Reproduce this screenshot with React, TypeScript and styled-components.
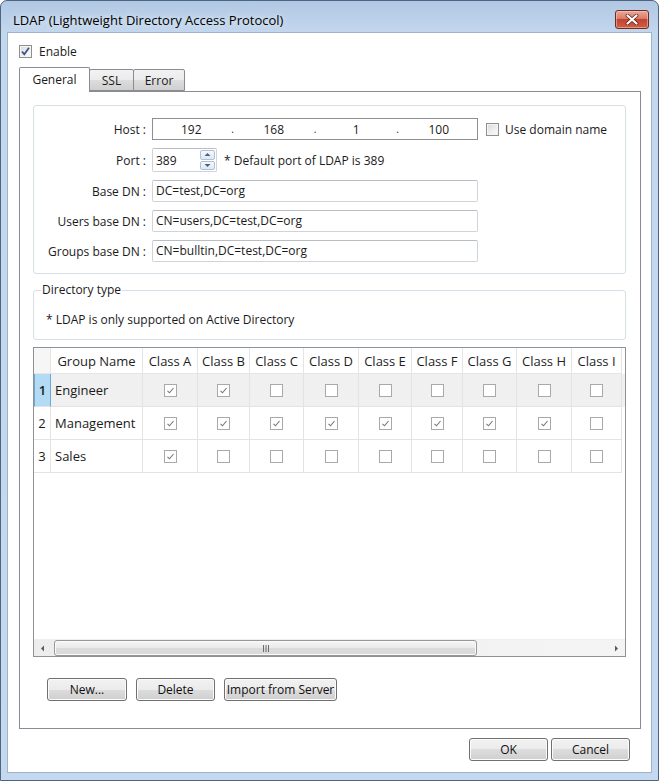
import styled, { createGlobalStyle } from 'styled-components'

const GlobalStyle = createGlobalStyle`
  html, body { margin: 0; padding: 0; background: #fff; }
  body {
    font-family: 'Open Sans', 'Noto Sans', sans-serif;
    font-size: 12px;
    color: #1a1a1a;
  }
  * { box-sizing: border-box; }
`

const Window = styled.div`
  width: 659px;
  height: 781px;
  border: 1px solid #4f647e;
  border-radius: 7px 7px 0 0;
  background: linear-gradient(#b1c8e4 0, #c3d7ed 32px, #c4d9ef 100%);
  display: flex;
  flex-direction: column;
`

const TitleBar = styled.div`
  height: 31px;
  padding: 6px 9px 0 12px;
  display: flex;
  align-items: center;
  justify-content: space-between;
`

const Title = styled.div`
  font-size: 13px;
  color: #000;
  text-shadow: 0 0 6px rgba(255, 255, 255, 0.9);
`

const CloseButton = styled.div`
  width: 34px;
  height: 19px;
  margin-top: -1px;
  border: 1px solid #6e2b22;
  border-radius: 3px;
  background: linear-gradient(#e9a99b 0, #d97a66 45%, #c2442f 50%, #cf5f45 100%);
  box-shadow: inset 0 0 0 1px rgba(255, 210, 200, 0.5);
  display: flex;
  align-items: center;
  justify-content: center;
`

const Client = styled.div`
  flex: 1;
  margin: 0 6px 7px;
  border: 1px solid #9fb4cc;
  background: #fff;
  padding: 12px 10px 10px 11px;
  display: flex;
  flex-direction: column;
`

const CheckRow = styled.label`
  display: flex;
  align-items: center;
  gap: 7px;
  height: 13px;
  line-height: 13px;
`

const Box = styled.span<{ $light?: boolean }>`
  width: 13px;
  height: 13px;
  flex: none;
  border: 1px solid ${(p) => (p.$light ? '#a9a9a9' : '#8e8f8f')};
  background: ${(p) =>
    p.$light ? '#fff' : 'linear-gradient(135deg, #d9d9d9 0, #f0f0f0 60%, #fbfbfb 100%)'};
  box-shadow: ${(p) => (p.$light ? 'none' : 'inset 0 0 0 1px #f4f4f4')};
  display: flex;
  align-items: center;
  justify-content: center;
`

const TabStrip = styled.div`
  margin-top: 9px;
  height: 24px;
  display: flex;
  align-items: flex-end;
`

const Tab = styled.div<{ $active?: boolean; $w: number }>`
  width: ${(p) => p.$w}px;
  height: ${(p) => (p.$active ? 25 : 22)}px;
  margin-bottom: ${(p) => (p.$active ? -1 : 0)}px;
  margin-left: ${(p) => (p.$active ? 0 : -1)}px;
  position: relative;
  z-index: ${(p) => (p.$active ? 2 : 1)};
  border: 1px solid #898c95;
  border-bottom: ${(p) => (p.$active ? 'none' : '1px solid #898c95')};
  border-radius: 2px 2px 0 0;
  background: ${(p) =>
    p.$active ? '#fff' : 'linear-gradient(#f2f2f2 0, #ebebeb 50%, #dddddd 50%, #cfcfcf 100%)'};
  display: flex;
  align-items: center;
  justify-content: center;
  padding-bottom: ${(p) => (p.$active ? 2 : 0)}px;
  &:first-child { margin-left: 0; }
`

const Panel = styled.div`
  border: 1px solid #898c95;
  background: #fff;
  padding: 13px 14px 27px 13px;
  display: flex;
  flex-direction: column;
`

const GroupBox = styled.div`
  border: 1px solid #d5dfe5;
  border-radius: 3px;
  padding: 12px 0 11px 0;
`

const FormGrid = styled.div`
  display: grid;
  grid-template-columns: 112px auto;
  column-gap: 6px;
  row-gap: 8px;
  align-items: center;
`

const Label = styled.div`
  text-align: right;
  white-space: nowrap;
`

const FieldLine = styled.div`
  display: flex;
  align-items: center;
`

const TextBox = styled.div`
  width: 326px;
  height: 22px;
  border: 1px solid #cfd4da;
  border-top-color: #b9bec5;
  border-radius: 2px;
  padding-left: 3px;
  line-height: 20px;
  white-space: nowrap;
`

const IpBox = styled.div`
  width: 326px;
  height: 22px;
  border: 1px solid #8d8f91;
  display: flex;
  align-items: center;
`

const IpPart = styled.span`
  flex: 1;
  text-align: center;
`

const IpDot = styled.span`
  width: 6px;
  text-align: center;
  font-size: 10px;
`

const SideCheck = styled(CheckRow)`
  margin-left: 8px;
  gap: 6px;
`

const Spinner = styled.div`
  width: 65px;
  height: 24px;
  border: 1px solid #cfd4da;
  border-top-color: #b9bec5;
  border-radius: 2px;
  display: flex;
  align-items: center;
  justify-content: space-between;
  padding: 1px 1px 1px 3px;
`

const SpinButtons = styled.div`
  width: 15px;
  height: 20px;
  display: flex;
  flex-direction: column;
  gap: 1px;
`

const SpinButton = styled.div`
  flex: 1;
  border: 1px solid #b3c0d1;
  border-radius: 2px;
  background: linear-gradient(#f4f8fd, #dde8f5);
  display: flex;
  align-items: center;
  justify-content: center;
`

const Note = styled.span`
  margin-left: 7px;
`

const FieldSet = styled.fieldset`
  margin: 8px 0 0 0;
  border: 1px solid #d5dfe5;
  border-radius: 3px;
  padding: 0 12px 11px 12px;
  min-width: 0;
`

const Legend = styled.legend`
  margin-left: -5px;
  padding: 0 1px;
  line-height: 16px;
`

const FieldText = styled.div`
  margin-top: 14px;
  line-height: 16px;
`

const Table = styled.div`
  margin-top: 7px;
  height: 310px;
  border: 1px solid #8e9296;
  display: flex;
  flex-direction: column;
`

const GridRow = styled.div<{ $h: number; $sel?: boolean }>`
  display: grid;
  grid-template-columns: 17px 92px 55px 52px 54px 55px 53px 51px 54px 55px 50px;
  height: ${(p) => p.$h}px;
  background: ${(p) => (p.$sel ? '#f0f0f0' : '#fff')};
  font-size: 13px;
`

const HeadCell = styled.div<{ $corner?: boolean }>`
  border-right: 1px solid #e5e5e5;
  border-bottom: 1px solid #e5e5e5;
  background: ${(p) => (p.$corner ? '#f6f6f6' : '#fff')};
  display: flex;
  align-items: center;
  justify-content: center;
  white-space: nowrap;
  overflow: hidden;
  color: #1e1e1e;
`

const Cell = styled.div<{ $left?: boolean }>`
  border-right: 1px solid #e3e3e3;
  border-bottom: 1px solid #e3e3e3;
  display: flex;
  align-items: center;
  justify-content: ${(p) => (p.$left ? 'flex-start' : 'center')};
  padding-left: ${(p) => (p.$left ? 4 : 0)}px;
  white-space: nowrap;
`

const RowHead = styled.div<{ $sel?: boolean }>`
  border-right: 1px solid ${(p) => (p.$sel ? '#6ea8d6' : '#e3e3e3')};
  border-left: ${(p) => (p.$sel ? '1px solid #6ea8d6' : 'none')};
  border-bottom: 1px solid #e3e3e3;
  background: ${(p) => (p.$sel ? '#b4dbf4' : '#fff')};
  display: flex;
  align-items: center;
  justify-content: center;
  font-weight: ${(p) => (p.$sel ? 600 : 400)};
`

const TableBlank = styled.div`
  flex: 1;
`

const HScroll = styled.div`
  height: 17px;
  display: flex;
  align-items: stretch;
  background: linear-gradient(90deg, #ededed, #f4f4f4);
  border-top: 1px solid #f0f0f0;
`

const ScrollArrow = styled.div`
  width: 17px;
  display: flex;
  align-items: center;
  justify-content: center;
`

const ScrollTrack = styled.div`
  flex: 1;
  padding: 0 2px;
  display: flex;
  align-items: stretch;
`

const Thumb = styled.div`
  width: 423px;
  margin: 0 0 0 1px;
  border: 1px solid #979797;
  border-radius: 3px;
  background: linear-gradient(#f6f6f6 0, #e9e9e9 50%, #dcdcdc 50%, #d9d9d9 100%);
  box-shadow: inset 0 0 0 1px #fbfbfb;
  display: flex;
  align-items: center;
  justify-content: center;
`

const ButtonRow = styled.div<{ $end?: boolean }>`
  display: flex;
  gap: ${(p) => (p.$end ? 3 : 9)}px;
  justify-content: ${(p) => (p.$end ? 'flex-end' : 'flex-start')};
  margin-top: ${(p) => (p.$end ? 9 : 21)}px;
  padding: ${(p) => (p.$end ? '0 11px 0 0' : '0 0 0 14px')};
`

const Button = styled.div<{ $w: number }>`
  width: ${(p) => p.$w}px;
  height: 23px;
  border: 1px solid #707070;
  border-radius: 3px;
  background: linear-gradient(#f2f2f2 0, #ebebeb 50%, #dddddd 50%, #cfcfcf 100%);
  box-shadow: inset 0 0 0 1px #fcfcfc;
  display: flex;
  align-items: center;
  justify-content: center;
  white-space: nowrap;
  color: #111;
`

const columns = [
  { name: 'Class A' },
  { name: 'Class B' },
  { name: 'Class C' },
  { name: 'Class D' },
  { name: 'Class E' },
  { name: 'Class F' },
  { name: 'Class G' },
  { name: 'Class H' },
  { name: 'Class I' },
]

const groups = [
  { name: 'Engineer', checks: [1, 1, 0, 0, 0, 0, 0, 0, 0] },
  { name: 'Management', checks: [1, 1, 1, 1, 1, 1, 1, 1, 0] },
  { name: 'Sales', checks: [1, 0, 0, 0, 0, 0, 0, 0, 0] },
]

function Check({ checked, light }: { checked?: boolean; light?: boolean }) {
  return (
    <Box $light={light}>
      {checked &&
        (light ? (
          <svg width="11" height="11" viewBox="0 0 11 11">
            <path d="M2.5 5.8 L4.5 7.8 L8.5 3" fill="none" stroke="#767676" strokeWidth="1.1" />
          </svg>
        ) : (
          <svg width="11" height="11" viewBox="0 0 11 11">
            <path d="M2 5.5 L4.3 8.3 L9 1.8" fill="none" stroke="#3b4f8c" strokeWidth="1.7" />
          </svg>
        ))}
    </Box>
  )
}

function Arrow({ dir }: { dir: 'up' | 'down' | 'left' | 'right' }) {
  const d = {
    up: 'M0.5 4 L3.5 1 L6.5 4 Z',
    down: 'M0.5 1 L3.5 4 L6.5 1 Z',
    left: 'M4 0.5 L1 3.5 L4 6.5 Z',
    right: 'M1 0.5 L4 3.5 L1 6.5 Z',
  }[dir]
  const vertical = dir === 'up' || dir === 'down'
  return (
    <svg width={vertical ? 7 : 5} height={vertical ? 5 : 7} viewBox={vertical ? '0 0 7 5' : '0 0 5 7'}>
      <path d={d} fill={vertical ? '#4b5f82' : '#5a5a5a'} />
    </svg>
  )
}

export default function App() {
  return (
    <>
      <GlobalStyle />
      <Window>
        <TitleBar>
          <Title>LDAP (Lightweight Directory Access Protocol)</Title>
          <CloseButton>
            <svg width="14" height="11" viewBox="0 0 14 11">
              <path d="M2.5 1.5 L11.5 9.5 M11.5 1.5 L2.5 9.5" stroke="#5a1d16" strokeWidth="3.6" strokeLinecap="round" />
              <path d="M2.5 1.5 L11.5 9.5 M11.5 1.5 L2.5 9.5" stroke="#fff" strokeWidth="2.2" strokeLinecap="round" />
            </svg>
          </CloseButton>
        </TitleBar>

        <Client>
          <CheckRow>
            <Check checked />
            Enable
          </CheckRow>

          <TabStrip>
            <Tab $active $w={71}>General</Tab>
            <Tab $w={45}>SSL</Tab>
            <Tab $w={52}>Error</Tab>
          </TabStrip>

          <Panel>
            <GroupBox>
              <FormGrid>
                <Label>Host :</Label>
                <FieldLine>
                  <IpBox>
                    <IpPart>192</IpPart>
                    <IpDot>.</IpDot>
                    <IpPart>168</IpPart>
                    <IpDot>.</IpDot>
                    <IpPart>1</IpPart>
                    <IpDot>.</IpDot>
                    <IpPart>100</IpPart>
                  </IpBox>
                  <SideCheck>
                    <Check />
                    Use domain name
                  </SideCheck>
                </FieldLine>

                <Label>Port :</Label>
                <FieldLine>
                  <Spinner>
                    <span>389</span>
                    <SpinButtons>
                      <SpinButton><Arrow dir="up" /></SpinButton>
                      <SpinButton><Arrow dir="down" /></SpinButton>
                    </SpinButtons>
                  </Spinner>
                  <Note>* Default port of LDAP is 389</Note>
                </FieldLine>

                <Label>Base DN :</Label>
                <TextBox>DC=test,DC=org</TextBox>

                <Label>Users base DN :</Label>
                <TextBox>CN=users,DC=test,DC=org</TextBox>

                <Label>Groups base DN :</Label>
                <TextBox>CN=bulltin,DC=test,DC=org</TextBox>
              </FormGrid>
            </GroupBox>

            <FieldSet>
              <Legend>Directory type</Legend>
              <FieldText>* LDAP is only supported on Active Directory</FieldText>
            </FieldSet>

            <Table>
              <GridRow $h={26}>
                <HeadCell $corner />
                <HeadCell>Group Name</HeadCell>
                {columns.map((c) => (
                  <HeadCell key={c.name}>{c.name}</HeadCell>
                ))}
              </GridRow>
              {groups.map((g, i) => (
                <GridRow key={g.name} $h={33} $sel={i === 0}>
                  <RowHead $sel={i === 0}>{i + 1}</RowHead>
                  <Cell $left>{g.name}</Cell>
                  {g.checks.map((v, j) => (
                    <Cell key={j}>
                      <Check light checked={!!v} />
                    </Cell>
                  ))}
                </GridRow>
              ))}
              <TableBlank />
              <HScroll>
                <ScrollArrow><Arrow dir="left" /></ScrollArrow>
                <ScrollTrack>
                  <Thumb>
                    <svg width="8" height="7" viewBox="0 0 8 7">
                      <path d="M1.5 0 V7 M4 0 V7 M6.5 0 V7" stroke="#6b6b6b" strokeWidth="1" />
                    </svg>
                  </Thumb>
                </ScrollTrack>
                <ScrollArrow><Arrow dir="right" /></ScrollArrow>
              </HScroll>
            </Table>

            <ButtonRow>
              <Button $w={80}>New...</Button>
              <Button $w={79}>Delete</Button>
              <Button $w={113}>Import from Server</Button>
            </ButtonRow>
          </Panel>

          <ButtonRow $end>
            <Button $w={79}>OK</Button>
            <Button $w={79}>Cancel</Button>
          </ButtonRow>
        </Client>
      </Window>
    </>
  )
}
